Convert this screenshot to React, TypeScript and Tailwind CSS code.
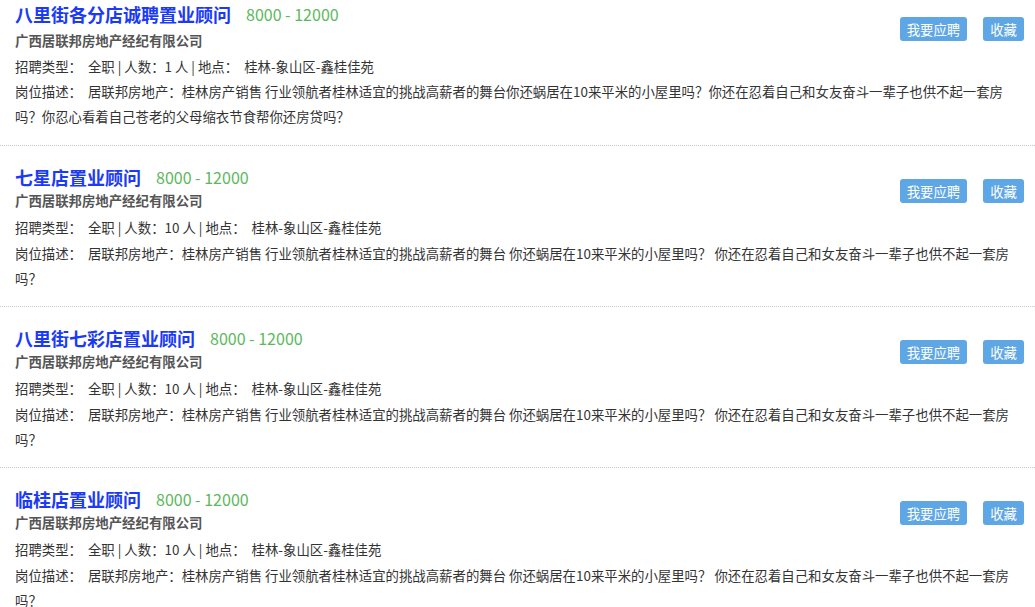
import React from 'react';

type Job = {
  title: string;
  count: string;
  desc: string;
};

const longDesc =
  '居联邦房地产：桂林房产销售 行业领航者桂林适宜的挑战高薪者的舞台你还蜗居在10来平米的小屋里吗？你还在忍着自己和女友奋斗一辈子也供不起一套房吗？你忍心看着自己苍老的父母缩衣节食帮你还房贷吗？';
const shortDesc =
  '居联邦房地产：桂林房产销售 行业领航者桂林适宜的挑战高薪者的舞台 你还蜗居在10来平米的小屋里吗？ 你还在忍着自己和女友奋斗一辈子也供不起一套房吗？';

const jobs: Job[] = [
  { title: '八里街各分店诚聘置业顾问', count: '1', desc: longDesc },
  { title: '七星店置业顾问', count: '10', desc: shortDesc },
  { title: '八里街七彩店置业顾问', count: '10', desc: shortDesc },
  { title: '临桂店置业顾问', count: '10', desc: shortDesc },
];

function JobItem({ job, first }: { job: Job; first: boolean }) {
  return (
    <div
      className={`border-b border-dotted border-[#c8c8c8] pl-[15px] pr-[11px] ${
        first ? 'pt-0 pb-[16px]' : 'pt-[16px] pb-[15px]'
      }`}
    >
      <div className={`float-right flex gap-[16px] ${first ? 'mt-[18px]' : 'mt-[17px]'}`}>
        <button className="h-[24px] rounded-[3px] bg-[#5ea6e4] px-[7px] text-[13.4px] leading-[24px] text-white">
          我要应聘
        </button>
        <button className="h-[24px] rounded-[3px] bg-[#5ea6e4] px-[7px] text-[13.4px] leading-[24px] text-white">
          收藏
        </button>
      </div>
      <div className={`flex items-center gap-[15px] h-[30px] ${first ? '-mt-[1px]' : ''}`}>
        <span className="text-[18px] font-bold leading-[30px] text-[#1a3af8]">{job.title}</span>
        <span className="text-[16px] leading-[30px] text-[#5cb85c]">8000 - 12000</span>
      </div>
      <div
        className={`text-[13.4px] font-bold leading-[16px] text-[#555] ${first ? 'mt-[3px]' : 'mt-0'}`}
      >
        广西居联邦房地产经纪有限公司
      </div>
      <div className={`text-[13.4px] leading-[24px] text-[#333] ${first ? 'mt-[6px]' : 'mt-[7px]'}`}>
        招聘类型：&nbsp; 全职 | 人数：{job.count} 人 | 地点：&nbsp; 桂林-象山区-鑫桂佳苑
      </div>
      <div className={`text-[13.4px] leading-[25px] text-[#333] ${first ? 'mt-[1px]' : 'mt-[2px]'}`}>
        岗位描述：&nbsp; {job.desc}
      </div>
    </div>
  );
}

export default function App() {
  return (
    <div
      className="h-[607px] w-[1035px] overflow-hidden bg-white"
      style={{ fontFamily: '"Noto Sans CJK SC", "Noto Sans", sans-serif' }}
    >
      {jobs.map((job, i) => (
        <JobItem key={i} job={job} first={i === 0} />
      ))}
    </div>
  );
}
